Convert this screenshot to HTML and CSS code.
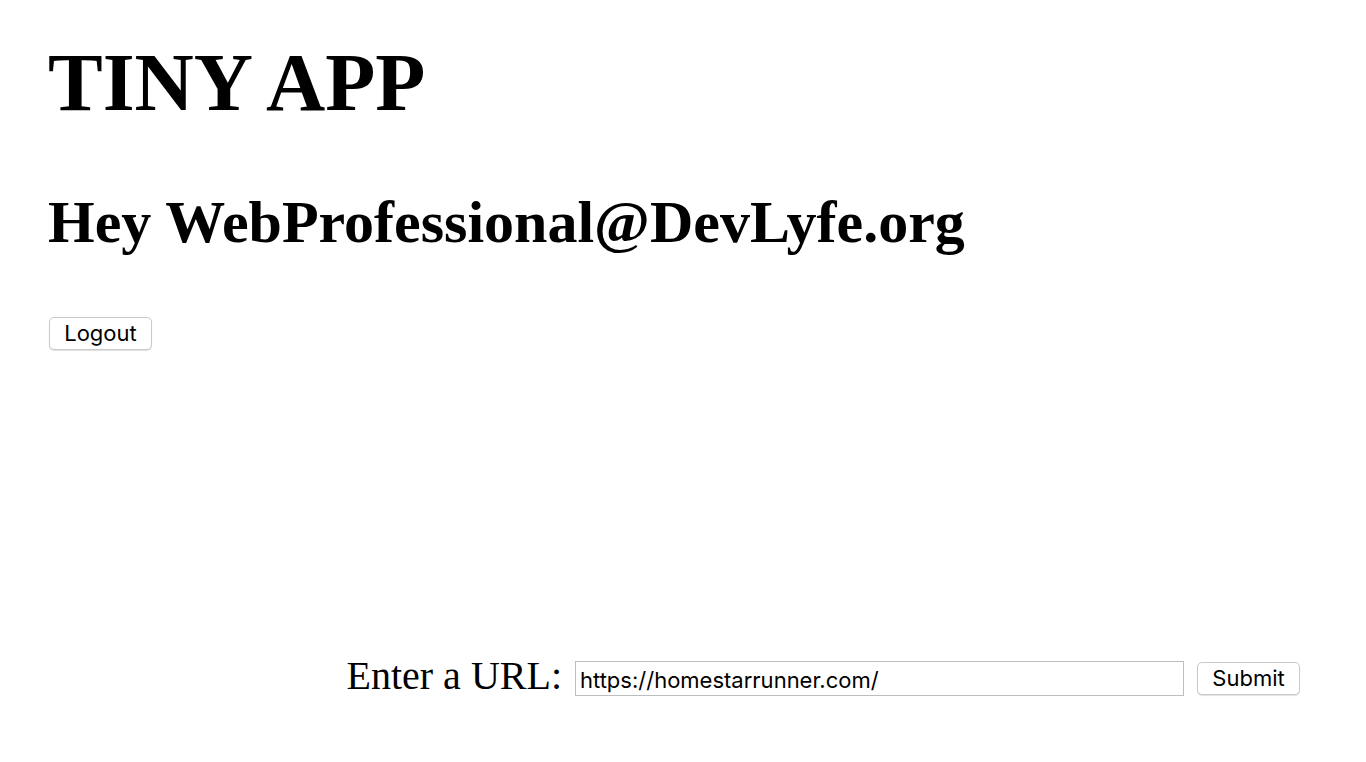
FILE: index.html
```html
<!DOCTYPE html>
<html>
<head>
<meta charset="utf-8">
<title>Tiny App</title>
<link rel="stylesheet" href="styles.css">
</head>
<body>
<div class="page">
  <header class="top">
    <h1 class="title">TINY APP</h1>
    <h2 class="greeting">Hey WebProfessional@DevLyfe.org</h2>
    <form class="logout-form">
      <button type="button" class="btn">Logout</button>
    </form>
  </header>
  <form class="url-form">
    <label class="url-label" for="url">Enter a URL:</label>
    <input class="url-input" id="url" type="text" value="https://homestarrunner.com/">
    <button type="button" class="btn">Submit</button>
  </form>
</div>
</body>
</html>
```

FILE: styles.css
```css
html, body {
  margin: 0;
  padding: 0;
  background: #fff;
  color: #000;
}

.page {
  height: 762px;
  box-sizing: border-box;
  display: flex;
  flex-direction: column;
  justify-content: space-between;
  padding: 37px 66px 66px 48px;
}

.top {
  display: flex;
  flex-direction: column;
  align-items: flex-start;
}

.title {
  margin: 0;
  font-family: "Liberation Serif", "Times New Roman", serif;
  font-weight: bold;
  font-size: 82px;
  line-height: 92px;
}

.greeting {
  margin: 59px 0 0;
  font-family: "Liberation Serif", "Times New Roman", serif;
  font-weight: bold;
  font-size: 60px;
  line-height: 69px;
}

.logout-form {
  margin: 60px 0 0 1px;
}

.btn {
  font-family: Inter, "Liberation Sans", sans-serif;
  font-size: 22px;
  color: #000;
  background: #fff;
  border: 1px solid #c9c9c9;
  border-radius: 5px;
  box-shadow: 0 1px 1px rgba(0, 0, 0, 0.12);
  height: 33px;
  width: 103px;
  padding: 0;
  line-height: 31px;
}

.url-form {
  display: flex;
  justify-content: flex-end;
  align-items: center;
  gap: 13px;
}

.url-label {
  font-family: "Liberation Serif", "Times New Roman", serif;
  font-size: 40px;
  line-height: 40px;
  margin-top: -6px;
}

.url-input {
  width: 609px;
  height: 35px;
  box-sizing: border-box;
  border: 1px solid #bdbdbd;
  padding: 2px 4px 0;
  font-family: Inter, "Liberation Sans", sans-serif;
  font-size: 22px;
  color: #000;
  outline: none;
}
```
